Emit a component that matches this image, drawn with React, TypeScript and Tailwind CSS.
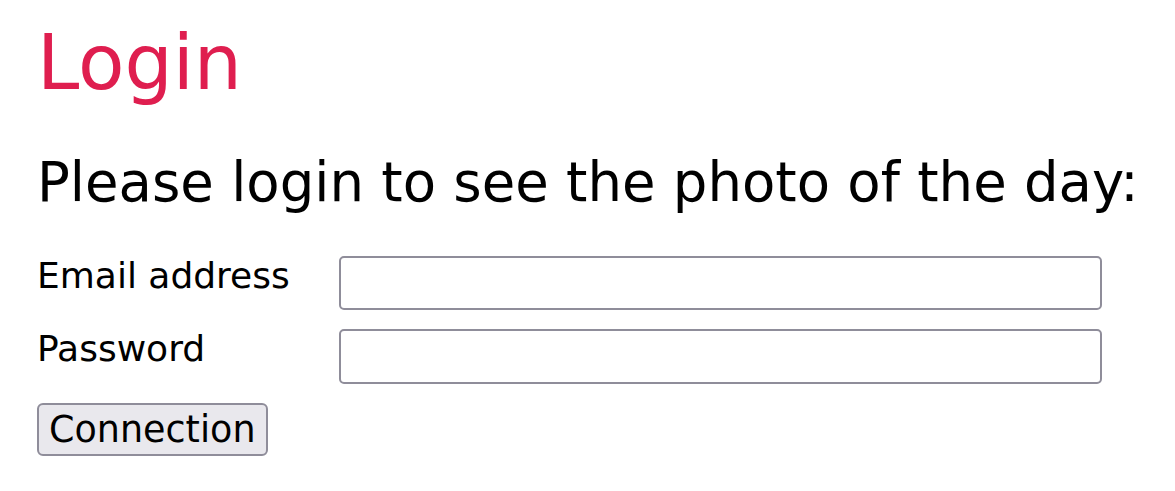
export default function App() {
  return (
    <div className="bg-white min-h-screen pl-[37px] pt-[18px] text-black">
      <div className="font-['DejaVu_Sans',sans-serif]">
        <h1 className="text-[76px] leading-[90px] text-[#df1e4f]">Login</h1>
        <h2 className="mt-[42px] text-[54.5px] leading-[64px]">Please login to see the photo of the day:</h2>
        <form className="mt-[42px] flex flex-col">
          <div className="flex items-start">
            <label className="w-[302px] text-[36px] leading-[40px]">Email address</label>
            <input type="email" className="w-[763px] h-[54px] rounded-[5px] border-2 border-[#8f8d9a] bg-white" />
          </div>
          <div className="mt-[19px] flex items-start">
            <label className="w-[302px] text-[36px] leading-[40px]">Password</label>
            <input type="password" className="w-[763px] h-[55px] rounded-[5px] border-2 border-[#8f8d9a] bg-white" />
          </div>
          <div className="mt-[19px]">
            <button type="button" className="h-[53px] px-[10px] rounded-[6px] border-2 border-[#8f8d9a] bg-[#e9e8ed] text-[36.5px] leading-[40px]">Connection</button>
          </div>
        </form>
      </div>
    </div>
  );
}
